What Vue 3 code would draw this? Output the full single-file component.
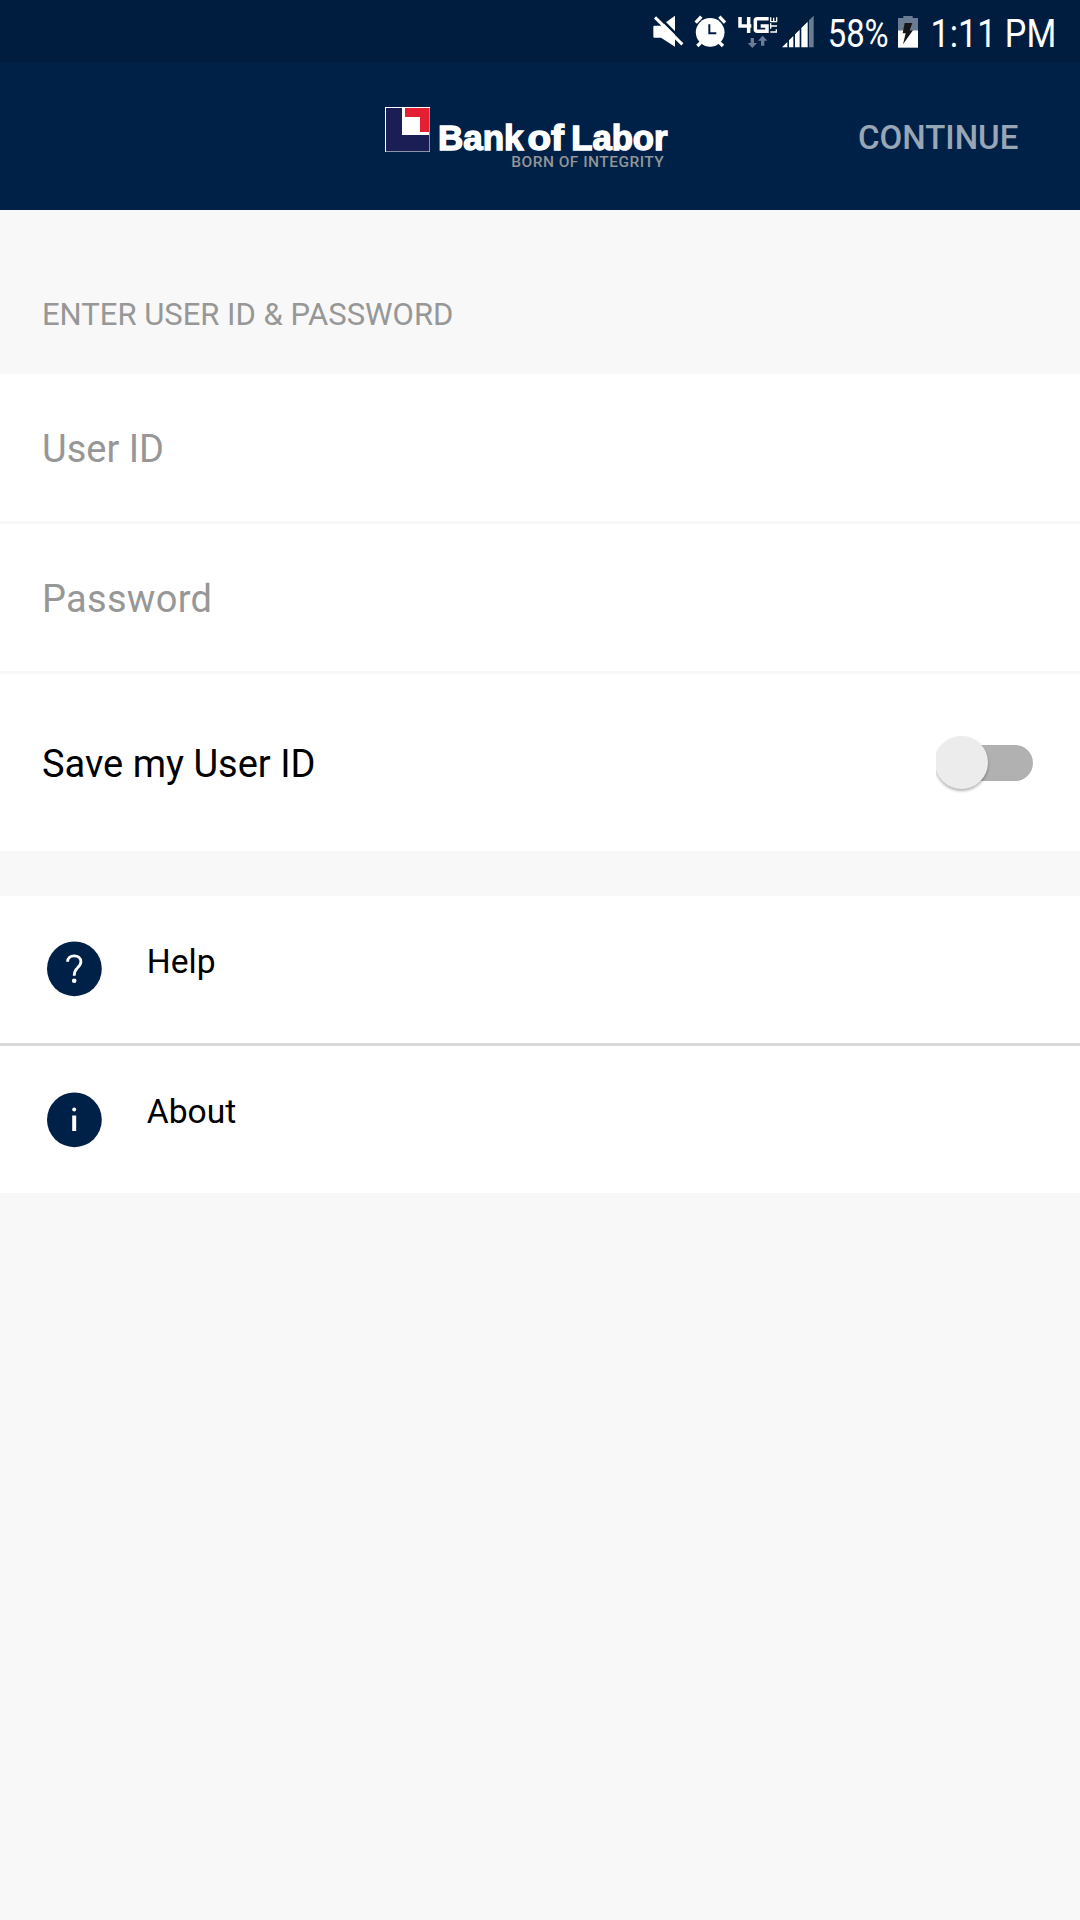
<script setup>
const fields = ['User ID', 'Password']
const links = [
  { id: 'help', label: 'Help' },
  { id: 'about', label: 'About' },
]
</script>

<template>
  <main class="screen">
    <div class="status">
      <svg width="440" height="63" viewBox="0 0 440 63">
        <!-- muted speaker -->
        <g transform="scale(.33333)">
          <path fill="#fff" d="M40 80q0-3 3-3h20L105 47v93L63 113H43q-3 0-3-3z" />
          <path stroke="#001d40" stroke-width="8" d="M50 44l84 84" />
          <path stroke="#fff" stroke-width="9" d="M45 52l82 81" />
        </g>
        <!-- alarm clock -->
        <g transform="scale(.33333)">
          <circle cx="210.5" cy="97" r="43" fill="#fff" />
          <path stroke="#fff" stroke-width="10" d="M167 68l17-18M255 68l-17-18M183 127l-11 11M238 127l11 11" />
          <path fill="none" stroke="#001d40" stroke-width="6" d="M208 73v27h21" />
        </g>
        <!-- 4G LTE with data arrows -->
        <g transform="scale(.33333)">
          <path fill="none" stroke="#fff" stroke-width="10.5" d="M300 51v27h34M326 51v48M386 56h-34q-6 0-6 6v26q0 6 6 6h29V78h-19" />
          <path fill="none" stroke="#fff" stroke-width="4" d="M391 96h20M409 88v10M391 78h20M392 70v16M391 65h20M392 52v13M401 53v11M410 52v13" />
          <path fill="#697c94" d="M332 114h10v15h9l-14 15-14-15h9zM363 137h10v-15h9l-14-15-14 15h9z" />
        </g>
        <!-- signal strength -->
        <g transform="scale(.33333)">
          <path fill="#fff" d="M426 142l16-16v16zM447 121l13-13v34h-13zM465 103l14-14v53h-14zM484 84l19-19v77h-19z" />
          <path fill="#697c94" d="M507 61l14-14v95h-14z" />
        </g>
        <text class="clock" x="187.7" y="46.7" textLength="61" lengthAdjust="spacingAndGlyphs">58%</text>
        <!-- charging battery -->
        <g transform="translate(180 0) scale(.33333)">
          <path fill="#697c94" d="M234 54h16v-6h28v6h16v37h-60z" />
          <path fill="#fff" d="M234 91h60v52h-60z" />
          <path fill="#161616" d="M254 69h23l-8 22h10l-30 42 8-33h-9z" />
        </g>
        <text class="clock" x="290.5" y="46.7" textLength="125.7" lengthAdjust="spacingAndGlyphs">1:11 PM</text>
      </svg>
    </div>

    <header class="bar">
      <svg class="logo" width="310" height="90" viewBox="0 0 310 90">
        <path fill="#fff" d="M15 17h45v45H15z" />
        <path fill="#1b1d55" d="M16 18h16v27h27v16H16z" />
        <path fill="#e51f33" d="M35 18h24v24h-9V27H35z" />
        <path fill="none" stroke="#8b93a5" d="M59.5 18v43.5H16" />
        <g class="name">
          <text x="68" y="60.3" textLength="85.5" lengthAdjust="spacingAndGlyphs">Bank</text>
          <text x="157.5" y="60.3" textLength="36.5" lengthAdjust="spacingAndGlyphs">of</text>
          <text x="201.3" y="60.3" textLength="96.2" lengthAdjust="spacingAndGlyphs">Labor</text>
        </g>
        <text class="motto" x="141.3" y="77" textLength="152.5">BORN OF INTEGRITY</text>
      </svg>
      <button class="continue">CONTINUE</button>
    </header>

    <h1 class="section">ENTER USER ID &amp; PASSWORD</h1>

    <section class="form">
      <div v-for="field in fields" :key="field" class="field" :class="{ secret: field === 'Password' }">{{ field }}</div>
      <div class="save">
        <span>Save my User ID</span>
        <div class="switch">
          <div class="track"></div>
          <div class="thumb"></div>
        </div>
      </div>
    </section>

    <nav class="links">
      <a v-for="link in links" :key="link.id" :class="['link', link.id]">
        <svg width="56" height="56" viewBox="0 0 56 56">
          <circle cx="28.4" cy="27.8" r="27.4" fill="#002147" />
          <template v-if="link.id === 'help'">
            <path fill="none" stroke="#fff" stroke-width="2.8" d="M21.6 20.8c0-3.9 2.9-6 6.6-6s6.700 2.300 6.700 6c0 3-1.700 4.500-3.500 6.200C29.400 28.800 28.200 30.300 28.200 34.800" />
            <circle cx="28.2" cy="39.8" r="2.3" fill="#fff" />
          </template>
          <template v-else>
            <path fill="#fff" d="M26.2 23.500h4v15.500h-4z" />
            <circle cx="28.2" cy="17.4" r="2" fill="#fff" />
          </template>
        </svg>
        <span>{{ link.label }}</span>
      </a>
    </nav>
  </main>
</template>

<style>
body {
  background: #f8f8f8;
}
</style>

<style scoped>
.screen {
  width: 1080px;
  height: 1920px;
  overflow: hidden;
  background: #f8f8f8;
  font-family: Roboto, sans-serif;
  color: #000;
}
.status {
  height: 63px;
  background: #001d40;
  display: flex;
  justify-content: flex-end;
}
.clock {
  font-size: 38.5px;
  fill: #fff;
}
.bar {
  height: 147px;
  background: #002147;
  display: flex;
  align-items: flex-start;
  padding-left: 370px;
}
.logo {
  margin-top: 27px;
}
.name {
  font-family: "Liberation Sans", sans-serif;
  font-size: 34.5px;
  font-weight: 700;
  fill: #fff;
  stroke: #fff;
  stroke-width: 1.4px;
}
.motto {
  font-size: 15.5px;
  font-weight: 500;
  fill: #939598;
}
.continue {
  margin: 55px 0 0 178px;
  padding: 0;
  border: 0;
  background: none;
  font: 500 33px/40px Roboto, sans-serif;
  color: #99a6b5;
}
.section {
  margin: 0;
  height: 164px;
  box-sizing: border-box;
  padding: 85px 0 0 42px;
  font-weight: 400;
  font-size: 31px;
  line-height: 40px;
  color: #979797;
}
.form,
.links {
  background: #fff;
}
.field {
  height: 150px;
  box-sizing: border-box;
  padding: 2px 0 0 42px;
  border-bottom: 3px solid #f8f8f8;
  display: flex;
  align-items: center;
  font-size: 38px;
  color: #979797;
}
.field.secret {
  letter-spacing: 0.3px;
}
.save {
  height: 177px;
  box-sizing: border-box;
  padding: 3px 47px 0 42px;
  display: flex;
  align-items: center;
  justify-content: space-between;
  font-size: 38px;
}
.switch {
  position: relative;
  width: 97px;
  height: 60px;
  overflow: hidden;
}
.track {
  margin: 11px 0 0 20px;
  height: 36px;
  border-radius: 18px;
  background: #b1b1b1;
}
.thumb {
  position: absolute;
  left: -1px;
  top: 2px;
  width: 53px;
  height: 53px;
  border-radius: 50%;
  background: #ececec;
  box-shadow: 0 2px 3px rgba(0, 0, 0, 0.3);
}
.links {
  margin-top: 45px;
}
.link {
  height: 147px;
  box-sizing: border-box;
  padding: 45px 0 0 46.4px;
  display: flex;
  align-items: flex-start;
  gap: 44.4px;
  font-size: 33.6px;
  line-height: 41px;
}
.link.help {
  height: 150px;
  border-bottom: 3px solid #d9d9d9;
}
.link.about svg {
  margin-top: 1px;
}
</style>
